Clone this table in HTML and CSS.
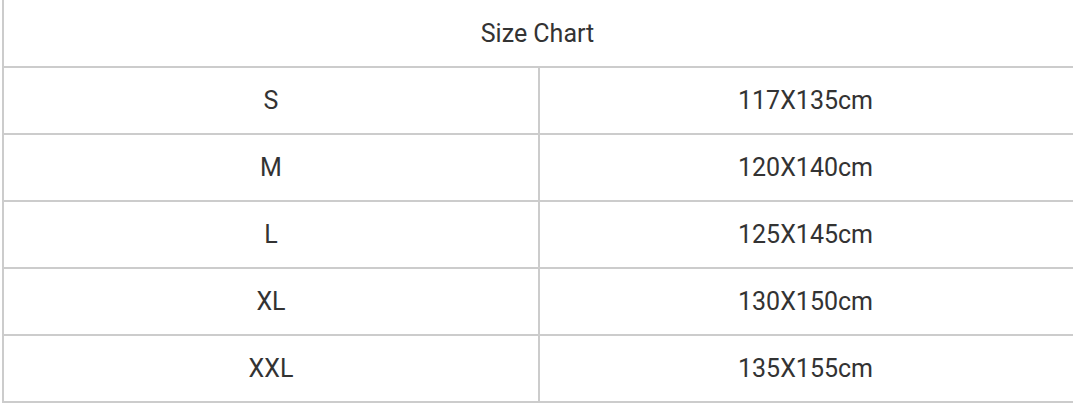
FILE: index.html
```html
<!DOCTYPE html>
<html lang="en">
<head>
<meta charset="utf-8">
<title>Size Chart</title>
<link rel="stylesheet" href="styles.css">
</head>
<body>
<div class="chart">
  <div class="cell head">Size Chart</div>
  <div class="cell">S</div>
  <div class="cell right">117X135cm</div>
  <div class="cell">M</div>
  <div class="cell right">120X140cm</div>
  <div class="cell">L</div>
  <div class="cell right">125X145cm</div>
  <div class="cell">XL</div>
  <div class="cell right">130X150cm</div>
  <div class="cell">XXL</div>
  <div class="cell right">135X155cm</div>
</div>
</body>
</html>
```

FILE: styles.css
```css
html, body {
  margin: 0;
  padding: 0;
  background: #ffffff;
  overflow: hidden;
}

body {
  font-family: Roboto, "Liberation Sans", sans-serif;
  color: #333333;
}

.chart {
  box-sizing: border-box;
  width: 1073px;
  margin-left: 2px;
  border-left: 2px solid #cccccc;
  display: grid;
  grid-template-columns: 534px 1fr;
}

.cell {
  height: 65px;
  border-bottom: 2px solid #cccccc;
  display: flex;
  align-items: center;
  justify-content: center;
  font-size: 25px;
  line-height: 1;
}

.cell.head {
  grid-column: 1 / -1;
  height: 66px;
  padding-right: 4px;
}

.cell.right {
  border-left: 2px solid #cccccc;
  padding-right: 4px;
}
```
